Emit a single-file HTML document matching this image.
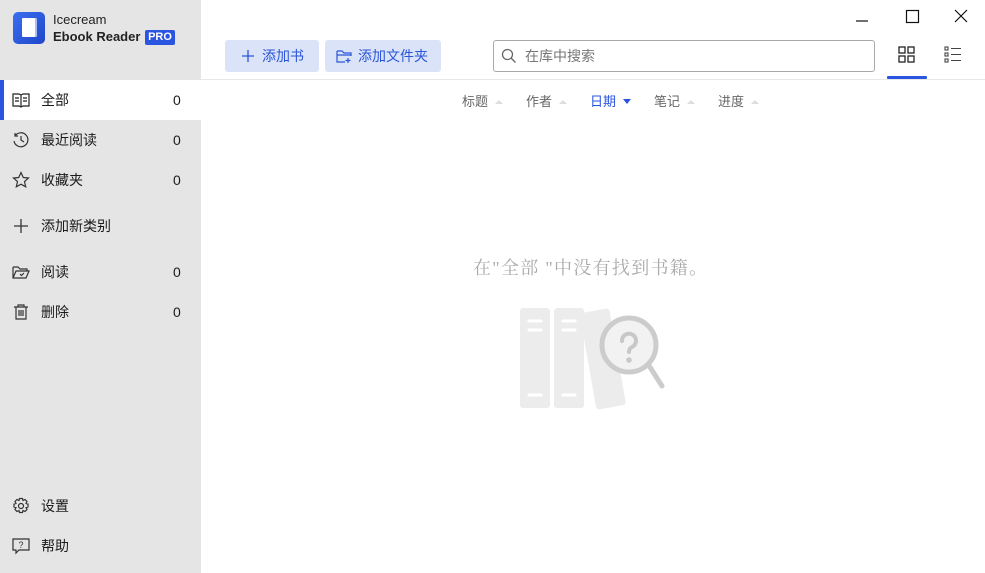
<!DOCTYPE html>
<html><head><meta charset="utf-8"><style>
*{margin:0;padding:0;box-sizing:border-box}
body{width:985px;height:573px;overflow:hidden;background:#fff;font-family:"Liberation Sans","Noto Sans CJK SC",sans-serif;font-size:14px;color:#1a1a1a;position:relative}
.side{position:absolute;left:0;top:0;width:201px;height:573px;background:#e5e5e5}
.abs{position:absolute}
.row{position:absolute;left:0;width:201px;height:40px;display:flex;align-items:center}
.row svg{position:absolute;left:12px}
.row .t{position:absolute;left:41px}
.row .n{position:absolute;left:173px}
.btn{position:absolute;top:40px;height:32px;background:#dbe3f8;border-radius:3px;color:#2a55d8;display:flex;align-items:center;font-size:14px}
.sort{position:absolute;top:91px;color:#666;font-size:13px}
.sort i{display:inline-block;width:0;height:0;border-left:4px solid transparent;border-right:4px solid transparent;border-bottom:4px solid #ddd;margin-left:7px;vertical-align:2px}
</style></head><body>
<div class="side"></div>
<div class="abs" style="left:13px;top:12px;width:32px;height:32px;border-radius:5px;background:linear-gradient(135deg,#3b6ff0,#1f47c8)"></div>
<div class="abs" style="left:22px;top:18px;width:13px;height:19px;background:#fff;border-radius:1px;box-shadow:2px 0 0 #a9c0f5"></div>
<div class="abs" style="left:53px;top:12px;font-size:13px;color:#222">Icecream</div>
<div class="abs" style="left:53px;top:29px;font-size:13px;color:#222;font-weight:bold">Ebook Reader</div>
<div class="abs" style="left:145px;top:30px;width:30px;height:15px;background:#2a55e0;color:#fff;font-size:11px;font-weight:bold;border-radius:2px;text-align:center;line-height:15px">PRO</div>

<div class="row" style="top:80px;background:#fff"><div class="abs" style="left:0;top:0;width:4px;height:40px;background:#2a55e0"></div>
<svg width="18" height="16" viewBox="0 0 18 16" fill="none" stroke="#222" stroke-width="1.2"><path d="M1 2h6l2 1 2-1h6v12h-6l-2 1-2-1H1z M9 3v12 M3 6h4M3 9h4M11 6h4M11 9h4"/></svg>
<span class="t">全部</span><span class="n">0</span></div>
<div class="row" style="top:120px"><svg width="18" height="18" viewBox="0 0 18 18" fill="none" stroke="#333" stroke-width="1.2"><path d="M3 5a7 7 0 1 1-1 5M3 2v3h3M9 5v4l3 2"/></svg><span class="t">最近阅读</span><span class="n">0</span></div>
<div class="row" style="top:160px"><svg width="18" height="18" viewBox="0 0 18 18" fill="none" stroke="#333" stroke-width="1.2"><path d="M9 1.5l2.3 5 5.2.5-4 3.6 1.2 5.2L9 13.2 4.3 15.8l1.2-5.2-4-3.6 5.2-.5z"/></svg><span class="t">收藏夹</span><span class="n">0</span></div>
<div class="row" style="top:206px"><svg width="18" height="18" viewBox="0 0 18 18" stroke="#333" stroke-width="1.3"><path d="M9 2v14M2 9h14"/></svg><span class="t">添加新类别</span></div>
<div class="row" style="top:252px"><svg width="18" height="18" viewBox="0 0 18 18" fill="none" stroke="#333" stroke-width="1.2"><path d="M1 4h5l2 2h7v2M1 4v11h13l3-7H4l-3 7M8 11l1.5 1.5L12 10"/></svg><span class="t">阅读</span><span class="n">0</span></div>
<div class="row" style="top:292px"><svg width="18" height="18" viewBox="0 0 18 18" fill="none" stroke="#333" stroke-width="1.2"><path d="M2 4h14M6 4V2h6v2M4 4v12h10V4M7 7v6M9 7v6M11 7v6"/></svg><span class="t">删除</span><span class="n">0</span></div>
<div class="row" style="top:486px"><svg width="18" height="18" viewBox="0 0 18 18" fill="none" stroke="#333" stroke-width="1.2"><circle cx="9" cy="9" r="2.5"/><path d="M7.5 1.5h3l.5 2 2-1 2 2-1 2 2 .5v3l-2 .5 1 2-2 2-2-1-.5 2h-3l-.5-2-2 1-2-2 1-2-2-.5v-3l2-.5-1-2 2-2 2 1z"/></svg><span class="t">设置</span></div>
<div class="row" style="top:526px"><svg width="18" height="18" viewBox="0 0 18 18" fill="none" stroke="#333" stroke-width="1.2"><path d="M1 2h16v11H7l-3 3v-3H1z"/><text x="9" y="11" font-size="9" text-anchor="middle" fill="#333" stroke="none" font-family="Liberation Sans">?</text></svg><span class="t">帮助</span></div>

<div class="btn" style="left:225px;width:94px"><svg style="margin-left:16px" width="14" height="14" viewBox="0 0 14 14" stroke="#2a55d8" stroke-width="1.3"><path d="M7 1v12M1 7h12"/></svg><span style="margin-left:7px">添加书</span></div>
<div class="btn" style="left:325px;width:116px"><svg style="margin-left:11px" width="17" height="16" viewBox="0 0 17 16" fill="none" stroke="#2a55d8" stroke-width="1.2"><path d="M1 3h5l2 2h7v3M1 3v11h8M1 7h14M12 10v5M9.5 12.5h5"/></svg><span style="margin-left:5px">添加文件夹</span></div>

<div class="abs" style="left:493px;top:40px;width:382px;height:32px;border:1px solid #aaa;border-radius:3px"></div>
<svg class="abs" style="left:501px;top:48px" width="16" height="16" viewBox="0 0 16 16" fill="none" stroke="#666" stroke-width="1.3"><circle cx="6.5" cy="6.5" r="5"/><path d="M10 10l4.5 4.5"/></svg>
<div class="abs" style="left:525px;top:46px;color:#777;font-size:14px">在库中搜索</div>

<svg class="abs" style="left:898px;top:46px" width="17" height="17" viewBox="0 0 17 17" fill="none" stroke="#222" stroke-width="1.3"><rect x="1" y="1" width="6" height="6"/><rect x="10" y="1" width="6" height="6"/><rect x="1" y="10" width="6" height="6"/><rect x="10" y="10" width="6" height="6"/></svg>
<div class="abs" style="left:887px;top:76px;width:40px;height:3px;background:#2a55e0;border-radius:1px"></div>
<svg class="abs" style="left:944px;top:46px" width="18" height="17" viewBox="0 0 18 17" fill="none" stroke="#444" stroke-width="1.1"><rect x="1" y="1" width="3" height="3"/><rect x="1" y="7" width="3" height="3"/><rect x="1" y="13" width="3" height="3"/><path d="M7 2.5h10M7 8.5h10M7 14.5h10"/></svg>

<div class="abs" style="left:201px;top:79px;width:784px;height:1px;background:#e8e8e8"></div>

<svg class="abs" style="left:856px;top:8px" width="120" height="20" viewBox="0 0 120 20" fill="none" stroke="#111" stroke-width="1.2"><path d="M0 13h12"/><rect x="50.5" y="2.5" width="12" height="12"/><path d="M99 2l12 12M111 2L99 14"/></svg>

<div class="sort" style="left:462px">标题<i></i></div>
<div class="sort" style="left:526px">作者<i></i></div>
<div class="sort" style="left:590px;color:#2a55e0">日期<i style="border-bottom:0;border-top:5px solid #2a55e0;vertical-align:2px"></i></div>
<div class="sort" style="left:654px">笔记<i></i></div>
<div class="sort" style="left:718px">进度<i></i></div>

<div class="abs" style="left:473px;top:254px;font-size:18px;letter-spacing:1.3px;color:#aaa;font-family:'Liberation Serif','Noto Serif CJK SC',serif">在"全部 "中没有找到书籍。</div>

<svg class="abs" style="left:518px;top:305px" width="150" height="105" viewBox="0 0 150 105">
<rect x="2" y="3" width="30" height="100" rx="3" fill="#ececec"/>
<rect x="36" y="3" width="30" height="100" rx="3" fill="#ececec"/>
<g transform="rotate(-10 85 55)"><rect x="70" y="5" width="30" height="98" rx="3" fill="#ececec"/></g>
<g stroke="#fff" stroke-width="3" stroke-linecap="round"><path d="M11 16h12M11 25h12M11 90h12M45 16h12M45 25h12M45 90h12"/></g>
<circle cx="111" cy="40" r="27" fill="#f2f2f2" stroke="#ccc" stroke-width="5"/>
<path d="M130 59l14 22" stroke="#ccc" stroke-width="5" stroke-linecap="round"/>
<path d="M104 36a7 7 0 1 1 10 6c-2 1-3 3-3 5" fill="none" stroke="#c8c8c8" stroke-width="4" stroke-linecap="round"/>
<circle cx="111" cy="55" r="2.8" fill="#c8c8c8"/>
</svg>
</body></html>
